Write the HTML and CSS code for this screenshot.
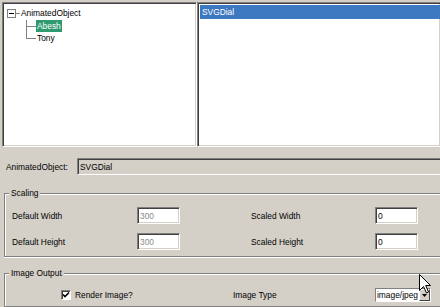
FILE: index.html
```html
<!DOCTYPE html>
<html lang="en">
<head>
    <meta charset="UTF-8">
    <title>Animated Object Export</title>
    <link rel="stylesheet" href="styles.css">
</head>
<body>

<div class="window">
    <div class="panes">
        <div class="tree sunken">
            <div class="tree-root">
                <span class="expander"><span class="minus"></span></span>
                <span class="stub"></span>
                <span class="node">AnimatedObject</span>
            </div>
            <div class="tree-children">
                <div class="tree-child">
                    <span class="elbow"></span>
                    <span class="node selected">Abesh</span>
                </div>
                <div class="tree-child last">
                    <span class="elbow"></span>
                    <span class="node">Tony</span>
                </div>
            </div>
        </div>
        <div class="list sunken">
            <div class="list-item selected">SVGDial</div>
        </div>
    </div>

    <div class="object-row">
        <span class="label">AnimatedObject:</span>
        <div class="field readonly">SVGDial</div>
    </div>

    <div class="group scaling">
        <div class="group-title">Scaling</div>
        <div class="scale-grid">
            <span class="label">Default Width</span>
            <div class="field disabled">300</div>
            <span></span>
            <span class="label">Scaled Width</span>
            <div class="field">0</div>

            <span class="label">Default Height</span>
            <div class="field disabled">300</div>
            <span></span>
            <span class="label">Scaled Height</span>
            <div class="field">0</div>
        </div>
    </div>

    <div class="group output">
        <div class="group-title">Image Output</div>
        <div class="output-row">
            <span class="checkbox">
                <svg width="8" height="8" viewBox="0 0 8 8"><path d="M1 3.5 L3 5.5 L7 1.5" fill="none" stroke="#000" stroke-width="1.6"/></svg>
            </span>
            <span class="label render">Render Image?</span>
            <span class="label type">Image Type</span>
            <div class="combo">
                <span class="combo-text">image/jpeg</span>
                <span class="combo-btn">
                    <svg width="5" height="3" viewBox="0 0 5 3"><path d="M0 0 H5 L2.5 3 Z" fill="#000"/></svg>
                </span>
            </div>
        </div>
    </div>
</div>

<!-- mouse pointer over the combo -->
<svg class="cursor" width="13" height="20" viewBox="0 0 13 20">
    <path d="M0.5 0.5 V16.5 L4.5 12.5 L7.5 19 L9.5 18 L6.7 11.5 H11.5 Z" fill="#fff" stroke="#000" stroke-width="1" stroke-linejoin="miter"/>
</svg>

</body>
</html>
```

FILE: styles.css
```css
body {
    margin: 0;
    width: 440px;
    height: 307px;
    overflow: hidden;
    position: relative;
    background-color: #d4d0c8;
    font-family: "Liberation Sans", Arial, sans-serif;
    font-size: 8.4px;
    color: #000;
}
.window {
    width: 440px;
}
.sunken {
    box-sizing: border-box;
    background: #fff;
    border: 1px solid;
    border-color: #808080 #fff #fff #808080;
    box-shadow: inset 1px 1px #404040, inset -1px -1px #d4d0c8;
}

/* top panes - the list runs on past the right edge, so no right border */
.panes {
    display: flex;
    padding: 2px 0 0 2px;
    height: 145px;
}
.tree {
    width: 195px;
    padding: 4px 0 0 4px;
}
.list {
    flex: 1;
    padding: 2px 0 0 2px;
    border-right-width: 0;
}
.list-item {
    height: 14px;
    line-height: 14px;
    padding-left: 2px;
}
.list-item.selected {
    background: #3d79c0;
    color: #fff;
}

/* tree */
.tree-root {
    display: flex;
    align-items: center;
    height: 12px;
}
.expander {
    box-sizing: border-box;
    width: 9px;
    height: 9px;
    border: 1px solid #808080;
    display: flex;
    align-items: center;
    justify-content: center;
}
.minus {
    width: 5px;
    height: 1px;
    background: #000;
}
.stub {
    width: 4px;
    height: 1px;
    background: #808080;
}
.node {
    padding: 0 1px;
    line-height: 12px;
}
.node.selected {
    background: #2f9a6f;
    color: #fff;
}
.tree-children {
    margin: 1px 0 0 19px;
}
.tree-child {
    display: flex;
    align-items: center;
    height: 12px;
}
.elbow {
    width: 10px;
    height: 12px;
    background:
        linear-gradient(#808080, #808080) left top / 1px 100% no-repeat,
        linear-gradient(#808080, #808080) left 50% / 100% 1px no-repeat;
}
.tree-child.last .elbow {
    background:
        linear-gradient(#808080, #808080) left top / 1px 50% no-repeat,
        linear-gradient(#808080, #808080) left 50% / 100% 1px no-repeat;
}

/* fields */
.field {
    box-sizing: border-box;
    height: 17px;
    line-height: 13px;
    padding: 2px 0 0 2px;
    background: #fff;
    border: 1px solid;
    border-color: #808080 #fff #fff #808080;
    box-shadow: inset 1px 1px #404040, inset -1px -1px #d4d0c8;
}
.field.readonly {
    background: #d4d0c8;
}
.field.disabled {
    color: #8a8a8a;
}

.object-row {
    display: flex;
    align-items: center;
    margin-top: 11px;
    padding-left: 6px;
}
.object-row .label {
    width: 71px;
}
.object-row .field {
    flex: 1;
    border-right-width: 0;
    box-shadow: inset 1px 1px #404040;
}

/* group boxes, cut off by the right edge */
.group {
    margin-left: 4px;
    border: 1px solid #808080;
    border-right-width: 0;
    box-shadow: inset 1px 1px #fff, 0 1px #fff;
}
.group-title {
    width: fit-content;
    height: 10px;
    line-height: 10px;
    margin: -6px 0 0 4px;
    padding: 0 2px;
    background: #d4d0c8;
}
.scaling {
    margin-top: 18px;
    padding: 9px 0 6px 7px;
}
.scaling .group-title {
    margin-top: -15px;
    margin-bottom: 9px;
    margin-left: -3px;
}
.scale-grid {
    display: grid;
    grid-template-columns: 125px 43px 71px 124px 43px;
    grid-auto-rows: 17px;
    row-gap: 9px;
    align-items: center;
}
.output {
    margin-top: 16px;
    padding: 0 0 4px 0;
}
.output-row {
    display: flex;
    align-items: center;
    margin-top: 10px;
    padding-left: 56px;
}
.checkbox {
    box-sizing: border-box;
    width: 10px;
    height: 10px;
    background: #fff;
    border: 1px solid;
    border-color: #808080 #fff #fff #808080;
    box-shadow: inset 1px 1px #404040;
    display: flex;
    align-items: center;
    justify-content: center;
}
.render {
    margin-left: 4px;
    width: 158px;
}
.type {
    width: 142px;
}
.combo {
    box-sizing: border-box;
    display: flex;
    width: 56px;
    height: 14px;
    background: #fff;
    border: 1px solid;
    border-color: #808080 #fff #fff #808080;
}
.combo-text {
    flex: 1;
    line-height: 12px;
    padding-left: 1px;
    white-space: nowrap;
    overflow: hidden;
}
.combo-btn {
    box-sizing: border-box;
    width: 11px;
    background: #d4d0c8;
    border: 1px solid;
    border-color: #fff #404040 #404040 #fff;
    display: flex;
    align-items: center;
    justify-content: center;
}
.cursor {
    position: absolute;
    left: 419px;
    top: 274px;
}
```
